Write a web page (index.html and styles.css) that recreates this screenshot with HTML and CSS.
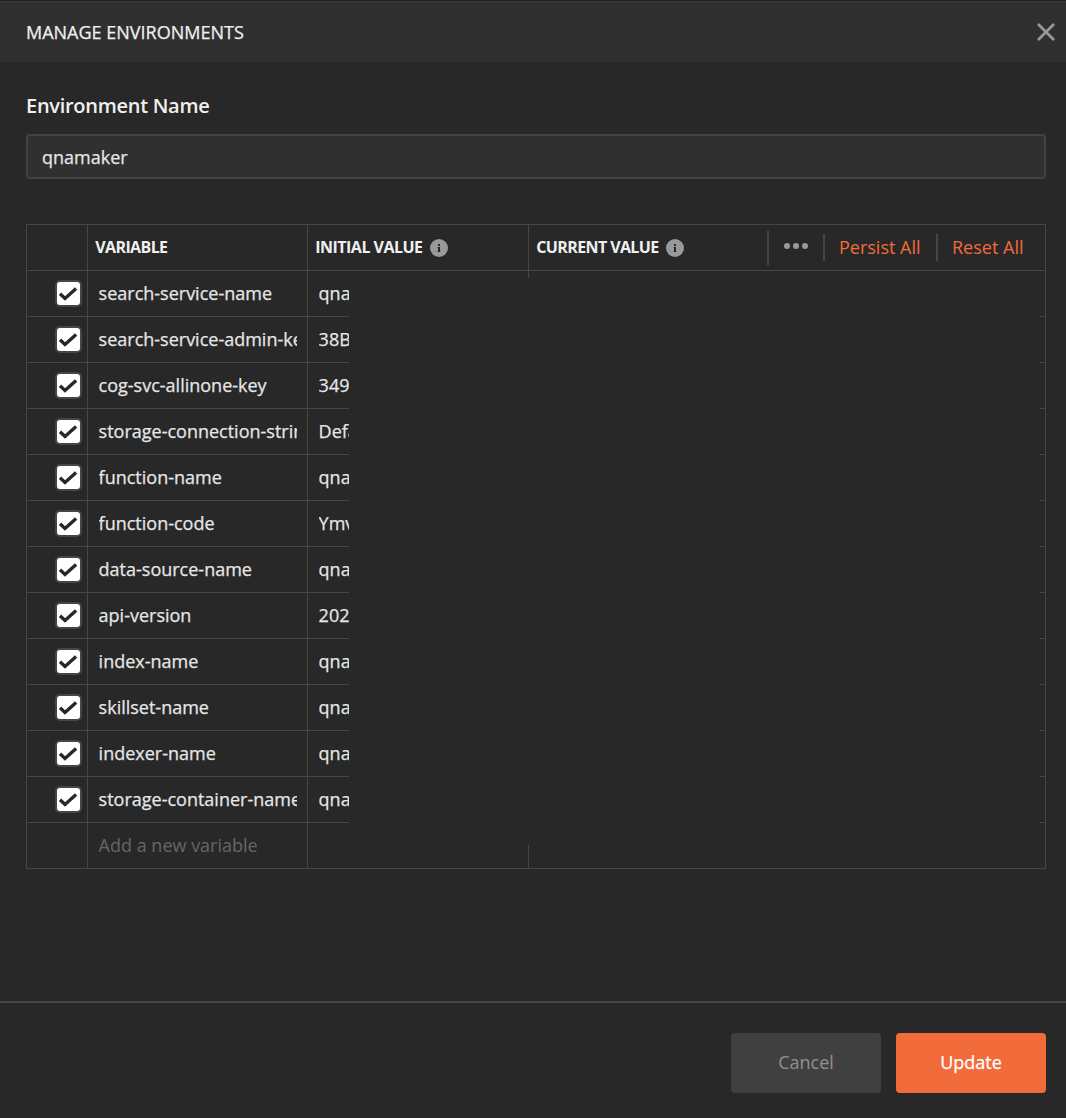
FILE: index.html
```html
<!DOCTYPE html>
<html lang="en">
<head>
<meta charset="utf-8">
<title>Manage Environments</title>
<link rel="stylesheet" href="styles.css">
</head>
<body>
<svg class="defs" aria-hidden="true">
  <symbol id="check" viewBox="0 0 23 23"><path d="M3 11.700l5 4.700L19.100 6.600" fill="none" stroke="#282828" stroke-width="3.400"/></symbol>
  <symbol id="info" viewBox="0 0 18 18"><circle cx="9" cy="9" r="9" fill="#999"/><path d="M8 5h2v2H8zM8 8h2v5H8z" fill="#282828"/><path d="M7 8h1v1H7zM7 12h1v1H7zM10 12h1v1h-1z" fill="#707070"/></symbol>
</svg>
<div class="modal">
  <header class="header">
    <h1 class="title">MANAGE ENVIRONMENTS</h1>
    <svg class="close" viewBox="0 0 18 18"><path d="M1 1l16 16M17 1L1 17" stroke="#999" stroke-width="2.700"/></svg>
  </header>
  <main class="content">
    <label class="label" for="env">Environment Name</label>
    <input class="input" id="env" value="qnamaker">
    <div class="table">
      <div class="row head">
        <div class="cell"></div>
        <div class="cell"><span>VARIABLE</span></div>
        <div class="cell"><span class="h-initial">INITIAL VALUE</span><svg class="info"><use href="#info"/></svg></div>
        <div class="cell"><span class="h-current">CURRENT VALUE</span><svg class="info"><use href="#info"/></svg>
          <div class="actions">
            <svg class="more" viewBox="0 0 24 6"><g fill="#999"><circle cx="3" cy="3" r="3"/><circle cx="12" cy="3" r="3"/><circle cx="21" cy="3" r="3"/></g></svg>
            <a class="action persist">Persist All</a>
            <a class="action reset">Reset All</a>
          </div>
        </div>
      </div>
      <div class="row"><div class="cell"><svg class="box"><use href="#check"/></svg></div><div class="cell"><span class="text">search-service-name</span></div><div class="cell"><span class="text">qna</span></div><div class="cell"></div></div>
      <div class="row"><div class="cell"><svg class="box"><use href="#check"/></svg></div><div class="cell"><span class="text">search-service-admin-key</span></div><div class="cell"><span class="text">38B</span></div><div class="cell"></div></div>
      <div class="row"><div class="cell"><svg class="box"><use href="#check"/></svg></div><div class="cell"><span class="text">cog-svc-allinone-key</span></div><div class="cell"><span class="text">349</span></div><div class="cell"></div></div>
      <div class="row"><div class="cell"><svg class="box"><use href="#check"/></svg></div><div class="cell"><span class="text">storage-connection-string</span></div><div class="cell"><span class="text">Defa</span></div><div class="cell"></div></div>
      <div class="row"><div class="cell"><svg class="box"><use href="#check"/></svg></div><div class="cell"><span class="text">function-name</span></div><div class="cell"><span class="text">qna</span></div><div class="cell"></div></div>
      <div class="row"><div class="cell"><svg class="box"><use href="#check"/></svg></div><div class="cell"><span class="text">function-code</span></div><div class="cell"><span class="text">Ymv</span></div><div class="cell"></div></div>
      <div class="row"><div class="cell"><svg class="box"><use href="#check"/></svg></div><div class="cell"><span class="text">data-source-name</span></div><div class="cell"><span class="text">qna</span></div><div class="cell"></div></div>
      <div class="row"><div class="cell"><svg class="box"><use href="#check"/></svg></div><div class="cell"><span class="text">api-version</span></div><div class="cell"><span class="text">202</span></div><div class="cell"></div></div>
      <div class="row"><div class="cell"><svg class="box"><use href="#check"/></svg></div><div class="cell"><span class="text">index-name</span></div><div class="cell"><span class="text">qna</span></div><div class="cell"></div></div>
      <div class="row"><div class="cell"><svg class="box"><use href="#check"/></svg></div><div class="cell"><span class="text">skillset-name</span></div><div class="cell"><span class="text">qna</span></div><div class="cell"></div></div>
      <div class="row"><div class="cell"><svg class="box"><use href="#check"/></svg></div><div class="cell"><span class="text">indexer-name</span></div><div class="cell"><span class="text">qna</span></div><div class="cell"></div></div>
      <div class="row"><div class="cell"><svg class="box"><use href="#check"/></svg></div><div class="cell"><span class="text">storage-container-name</span></div><div class="cell"><span class="text">qna</span></div><div class="cell"></div></div>
      <div class="row"><div class="cell"></div><div class="cell"><span class="text placeholder">Add a new variable</span></div><div class="cell"></div><div class="cell"></div></div>
      <div class="cover"></div>
    </div>
  </main>
  <footer class="footer">
    <button class="button cancel">Cancel</button>
    <button class="button update">Update</button>
  </footer>
</div>
</body>
</html>
```
FILE: styles.css
```css
* { box-sizing: border-box; }
body {
  margin: 0;
  background: #282828;
  color: #f0f0f0;
  font: 18px/24px "Open Sans", sans-serif;
}
.defs { position: absolute; width: 0; height: 0; }
.modal { display: flex; flex-direction: column; height: 1118px; overflow: hidden; }
.header {
  display: flex;
  align-items: center;
  justify-content: space-between;
  height: 62px;
  padding: 0 11px 0 26px;
  background: #303030;
  border-top: 1px solid #202020;
  box-shadow: inset 0 1px #3a3a3a;
}
.title { margin: 0; font-size: 18px; font-weight: 500; }
.title, .input, .text, .update { -webkit-text-stroke: 0.25px currentColor; }
.close { width: 18px; height: 18px; }
.content { flex: 1; padding: 32px 20px 0 26px; }
.label { display: block; font-size: 20px; font-weight: 600; line-height: 24px; letter-spacing: -0.28px; }
.input {
  display: block;
  width: 100%;
  height: 45px;
  margin-top: 16px;
  padding: 1px 14px 0;
  color: #e6e6e6;
  background: #303030;
  border: 2px solid #424242;
  border-radius: 4px;
  font: 500 18px "Open Sans", sans-serif;
}
.table { position: relative; margin-top: 45px; border: solid #464646; border-width: 1px 0 0 1px; }
.row { display: grid; grid-template-columns: 61px 220px 221px 1fr; height: 46px; }
.cell {
  display: flex;
  align-items: center;
  min-width: 0;
  padding: 0 10px 0 10.600px;
  border: solid #464646;
  border-width: 0 1px 1px 0;
}
.head .cell { padding: 0 0 0 7.300px; font-size: 16px; font-weight: 700; letter-spacing: -0.620px; }
.head .cell > span { line-height: 23px; }
.text { overflow: hidden; white-space: nowrap; font-weight: 500; line-height: 25px; color: #e6e6e6; }
.placeholder { font-weight: 400; color: #666; -webkit-text-stroke: 0; }
.box {
  flex: none;
  width: 27px;
  height: 27px;
  margin-left: 17.400px;
  background: #fff;
  border: 2px solid #464646;
  border-radius: 5px;
}
.head .h-initial { width: 107px; white-space: nowrap; letter-spacing: -0.520px; }
.head .h-current { width: 122px; white-space: nowrap; }
.info { flex: none; width: 18px; height: 18px; margin: 1px 0 0 7.700px; }
.actions { display: flex; align-items: center; height: 34px; margin-left: auto; padding-left: 15px; border-left: 2px solid #464646; letter-spacing: 0; }
.more { width: 24px; height: 6px; margin: -3px 15px 0 0; }
.action { height: 27px; border-left: 2px solid #464646; color: #f26b3a; font-size: 18px; font-weight: 400; line-height: 26px; padding-left: 14px; white-space: nowrap; }
.persist { width: 113px; }
.reset { width: 109px; }
.cover { position: absolute; left: 322px; top: 53px; width: 691px; height: 567px; background: #282828; }
.footer {
  display: flex;
  justify-content: flex-end;
  gap: 15px;
  height: 117px;
  padding: 30px 20px 0;
  border-top: 2px solid #464646;
}
.button { width: 150px; height: 60px; padding: 0 0 2px; border: 0; border-radius: 4px; font: 400 18px "Open Sans", sans-serif; }
.cancel { background: #404040; color: #919191; }
.update { background: #f26b3a; color: #fff; font-weight: 500; }
```
